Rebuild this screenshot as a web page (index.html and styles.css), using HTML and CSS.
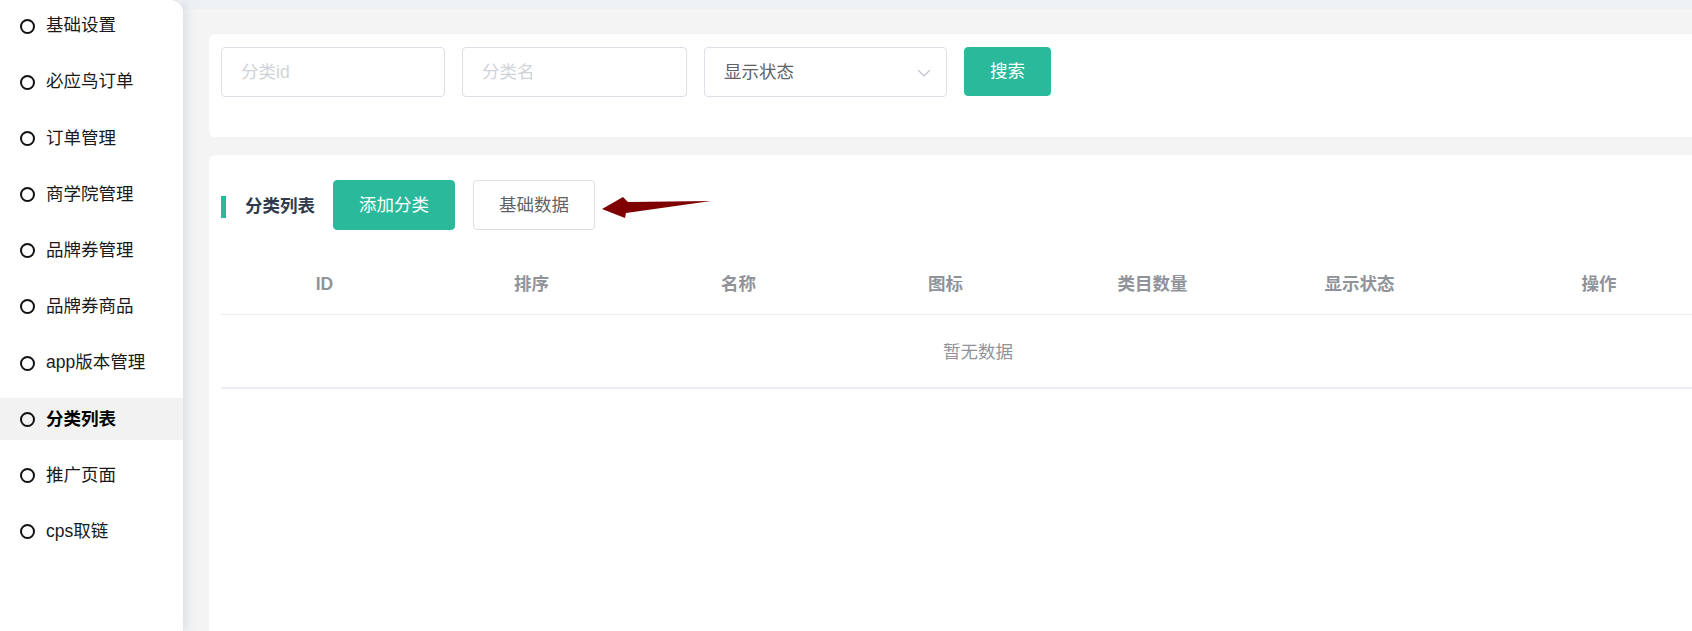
FILE: index.html
```html
<!DOCTYPE html>
<html lang="zh-CN">
<head>
<meta charset="utf-8">
<title>分类列表</title>
<link rel="stylesheet" href="styles.css">
</head>
<body>
<aside class="sidebar">
  <ul class="menu">
    <li class="menu-item"><span class="dot"></span><span>基础设置</span></li>
    <li class="menu-item"><span class="dot"></span><span>必应鸟订单</span></li>
    <li class="menu-item"><span class="dot"></span><span>订单管理</span></li>
    <li class="menu-item"><span class="dot"></span><span>商学院管理</span></li>
    <li class="menu-item"><span class="dot"></span><span>品牌券管理</span></li>
    <li class="menu-item"><span class="dot"></span><span>品牌券商品</span></li>
    <li class="menu-item"><span class="dot"></span><span>app版本管理</span></li>
    <li class="menu-item active"><span class="dot"></span><span>分类列表</span></li>
    <li class="menu-item"><span class="dot"></span><span>推广页面</span></li>
    <li class="menu-item"><span class="dot"></span><span>cps取链</span></li>
  </ul>
</aside>
<main class="main">
  <div class="topbar"></div>
  <div class="content">
    <section class="card search-card">
      <div class="field w1"><span class="placeholder">分类id</span></div>
      <div class="field w2"><span class="placeholder">分类名</span></div>
      <div class="field select w3"><span class="value">显示状态</span>
        <svg class="chev" width="14" height="8" viewBox="0 0 14 8"><path d="M1 1 L7 7 L13 1" fill="none" stroke="#c0c4cc" stroke-width="1.2"/></svg>
      </div>
      <button class="btn primary search-btn">搜索</button>
    </section>
    <section class="card list-card">
      <div class="title-row">
        <span class="accent"></span>
        <span class="title">分类列表</span>
        <button class="btn primary wide">添加分类</button>
        <button class="btn plain wide">基础数据</button>
        <svg class="arrow" width="112" height="26" viewBox="0 0 112 26"><polygon points="1,15 22,3 27,8 110,7 25,19 24,24" fill="#7f0000"/></svg>
      </div>
      <table class="table">
        <colgroup>
          <col class="c"><col class="c"><col class="c"><col class="c"><col class="c"><col class="c"><col class="c-last">
        </colgroup>
        <thead>
          <tr><th>ID</th><th>排序</th><th>名称</th><th>图标</th><th>类目数量</th><th>显示状态</th><th>操作</th></tr>
        </thead>
        <tbody>
          <tr><td class="empty" colspan="7">暂无数据</td></tr>
        </tbody>
      </table>
    </section>
  </div>
</main>
</body>
</html>
```
FILE: styles.css
```css
* { box-sizing: border-box; }
html, body { margin: 0; padding: 0; height: 100%; }
body {
  display: flex;
  overflow: hidden;
  background: #f4f4f5;
  font-family: "Liberation Sans", "Noto Sans CJK SC", sans-serif;
  font-size: 17.5px;
  color: #222;
}
.sidebar {
  width: 183px;
  flex-shrink: 0;
  height: 100vh;
  background: #fff;
  border-top-right-radius: 13px;
  box-shadow: 3px 0 12px rgba(60, 80, 110, 0.14);
  position: relative;
  z-index: 2;
}
.menu { list-style: none; margin: 0; padding: 5px 0 0; }
.menu-item {
  height: 42px;
  margin-bottom: 14.2px;
  display: flex;
  align-items: center;
  padding-left: 20px;
  line-height: 1;
  color: #1a1a1a;
}
.menu-item.active { background: #f2f2f2; font-weight: bold; color: #000; }
.dot {
  width: 15px;
  height: 15px;
  border: 2.7px solid #111;
  border-radius: 50%;
  margin-right: 11px;
  flex-shrink: 0;
}
.main { flex: 1; min-width: 0; display: flex; flex-direction: column; overflow: hidden; }
.topbar { height: 9px; background: #eef1f4; flex-shrink: 0; }
.content { padding: 25px 0 0 26px; }
.card {
  width: 1538px;
  background: #fff;
  border-radius: 6px;
}
.search-card {
  display: flex;
  align-items: flex-start;
  gap: 17px;
  padding: 13px 12px 40px;
  margin-bottom: 18px;
}
.field {
  height: 50px;
  border: 1px solid #dcdfe6;
  border-radius: 4px;
  display: flex;
  align-items: center;
  padding: 2px 19px 0;
  line-height: 1;
}
.w1 { width: 224px; }
.w2 { width: 225px; }
.w3 { width: 243px; justify-content: space-between; padding-right: 15px; }
.placeholder { color: #d0d3d9; }
.value { color: #606266; }
.btn {
  font-family: inherit;
  font-size: 17.5px;
  border-radius: 4px;
  cursor: pointer;
  line-height: 1;
  padding-top: 2px;
}
.btn.primary { background: #2ab99b; border: 1px solid #2ab99b; color: #fff; }
.btn.plain { background: #fff; border: 1px solid #dcdfe6; color: #606266; }
.search-btn { width: 87px; height: 49px; }
.list-card { padding: 25px 12px 0; height: 600px; }
.title-row { display: flex; align-items: center; height: 50px; }
.accent { width: 5px; height: 22px; background: #2ab99b; margin-top: 4px; }
.title { font-weight: bold; color: #303a4c; margin-left: 19px; margin-right: 18px; line-height: 1; padding-top: 3px; }
.wide { width: 122px; height: 50px; }
.btn.plain.wide { margin-left: 18px; }
.arrow { margin-left: 6px; margin-top: 3px; }
.table {
  margin-top: 24px;
  width: 1514px;
  table-layout: fixed;
  border-collapse: collapse;
}
.c { width: 207px; }
.c-last { width: 272px; }
.table th {
  height: 60px;
  padding: 2px 0 0;
  color: #909399;
  font-weight: bold;
  text-align: center;
  border-bottom: 1px solid #ebeef5;
  line-height: 1;
  vertical-align: middle;
}
.table td.empty {
  height: 74px;
  padding: 4px 0 0;
  text-align: center;
  color: #909399;
  border-bottom: 2px solid #ebeef5;
  line-height: 1;
}
```
